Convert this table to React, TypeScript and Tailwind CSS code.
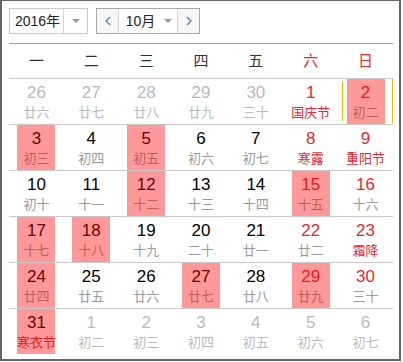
import React from 'react';

type Day = { d: number; lunar: string; out?: boolean; fest?: boolean; hl?: boolean; today?: boolean };

const weeks: Day[][] = [
  [
    { d: 26, lunar: '廿六', out: true },
    { d: 27, lunar: '廿七', out: true },
    { d: 28, lunar: '廿八', out: true },
    { d: 29, lunar: '廿九', out: true },
    { d: 30, lunar: '三十', out: true },
    { d: 1, lunar: '国庆节', fest: true },
    { d: 2, lunar: '初二', hl: true, today: true },
  ],
  [
    { d: 3, lunar: '初三', hl: true },
    { d: 4, lunar: '初四' },
    { d: 5, lunar: '初五', hl: true },
    { d: 6, lunar: '初六' },
    { d: 7, lunar: '初七' },
    { d: 8, lunar: '寒露', fest: true },
    { d: 9, lunar: '重阳节', fest: true },
  ],
  [
    { d: 10, lunar: '初十' },
    { d: 11, lunar: '十一' },
    { d: 12, lunar: '十二', hl: true },
    { d: 13, lunar: '十三' },
    { d: 14, lunar: '十四' },
    { d: 15, lunar: '十五', hl: true },
    { d: 16, lunar: '十六' },
  ],
  [
    { d: 17, lunar: '十七', hl: true },
    { d: 18, lunar: '十八', hl: true },
    { d: 19, lunar: '十九' },
    { d: 20, lunar: '二十' },
    { d: 21, lunar: '廿一' },
    { d: 22, lunar: '廿二' },
    { d: 23, lunar: '霜降', fest: true },
  ],
  [
    { d: 24, lunar: '廿四', hl: true },
    { d: 25, lunar: '廿五' },
    { d: 26, lunar: '廿六' },
    { d: 27, lunar: '廿七', hl: true },
    { d: 28, lunar: '廿八' },
    { d: 29, lunar: '廿九', hl: true },
    { d: 30, lunar: '三十' },
  ],
  [
    { d: 31, lunar: '寒衣节', hl: true, fest: true },
    { d: 1, lunar: '初二', out: true },
    { d: 2, lunar: '初三', out: true },
    { d: 3, lunar: '初四', out: true },
    { d: 4, lunar: '初五', out: true },
    { d: 5, lunar: '初六', out: true },
    { d: 6, lunar: '初七', out: true },
  ],
];

const weekdays = ['一', '二', '三', '四', '五', '六', '日'];

const Caret = () => (
  <svg width="8" height="4" viewBox="0 0 8 4" className="shrink-0">
    <path d="M0 0 L8 0 L4 4 Z" fill="#999" />
  </svg>
);

const Chevron = ({ dir }: { dir: 'l' | 'r' }) => (
  <svg width="6" height="10" viewBox="0 0 6 10">
    <polyline
      points={dir === 'l' ? '5,1 1,5 5,9' : '1,1 5,5 1,9'}
      fill="none"
      stroke="#5a78a8"
      strokeWidth="1.2"
    />
  </svg>
);

export default function App() {
  return (
    <div
      className="w-[401px] h-[361px] border-2 border-t border-[#666] bg-white pl-[7px] pr-[6px] pt-[7px]"
      style={{ fontFamily: '"Liberation Sans", Arial, "Noto Sans CJK SC", sans-serif' }}
    >
      {/* Toolbar */}
      <div className="flex items-center gap-2 h-[26px]">
        <div className="flex h-full w-[79px] border border-[#c8c8c8] bg-white text-[14px] text-[#222]">
          <div className="flex-1 flex items-center justify-center pl-[2px]">2016年</div>
          <div className="w-[24px] border-l border-[#d4d4d4] flex items-center justify-center">
            <Caret />
          </div>
        </div>
        <div className="flex h-full w-[104px] border border-[#a8a8a8] text-[14px] text-[#222]">
          <div className="w-[21px] bg-[#f6f6f6] flex items-center justify-center">
            <Chevron dir="l" />
          </div>
          <div className="flex-1 flex items-center justify-center gap-[9px] border-x border-[#d4d4d4] pl-[2px]">
            <span>10月</span>
            <Caret />
          </div>
          <div className="w-[21px] bg-[#f6f6f6] flex items-center justify-center">
            <Chevron dir="r" />
          </div>
        </div>
      </div>

      {/* Weekday header */}
      <div className="mt-[9px] w-[384px] border-t border-[#55a9f5]">
        <div className="grid grid-cols-7 h-[34px] items-center text-[15px] text-[#333]">
          {weekdays.map((w, i) => (
            <div key={w} className={`text-center ${i >= 5 ? 'text-[#e5282f]' : ''}`}>
              {w}
            </div>
          ))}
        </div>

        {/* Days */}
        {weeks.map((week, wi) => (
          <div key={wi} className="grid grid-cols-7 h-[46px] border-t border-[#c8c8c8]">
            {week.map((day, di) => {
              const weekend = di >= 5;
              const numColor = day.out
                ? 'text-[#b9b9b9]'
                : weekend
                  ? 'text-[#e5282f]'
                  : 'text-black';
              const lunarColor = day.out
                ? 'text-[#b9b9b9]'
                : day.fest
                  ? 'text-[#e5282f]'
                  : 'text-[#999]';
              return (
                <div key={di} className="relative flex flex-col items-center pt-[4px]">
                  <div className={`text-[17px] leading-[20px] ${numColor}`}>{day.d}</div>
                  <div className={`mt-[2px] text-[13px] leading-[16px] ${lunarColor}`}>{day.lunar}</div>
                  {day.hl && (
                    <div className="absolute top-0 bottom-0 left-1/2 -translate-x-1/2 w-[38px] bg-[rgba(255,0,0,0.4)]" />
                  )}
                  {day.today && (
                    <>
                      <div className="absolute left-[4px] top-[3px] bottom-[3px] w-px bg-[#f7b500]" />
                      <div className="absolute right-0 top-0 bottom-[1px] w-px bg-[#f7b500]" />
                    </>
                  )}
                </div>
              );
            })}
          </div>
        ))}
      </div>
    </div>
  );
}
